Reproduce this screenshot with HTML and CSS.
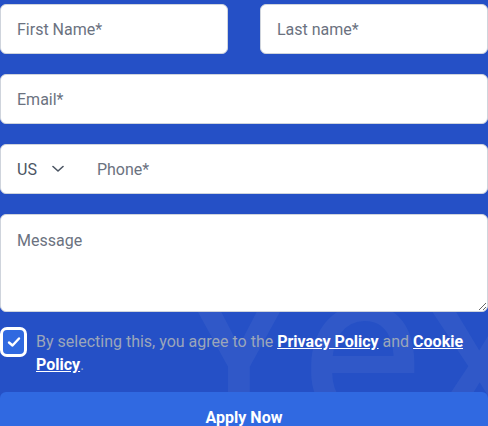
FILE: index.html
```html
<!DOCTYPE html>
<html>
<head>
<meta charset="utf-8">
<link rel="stylesheet" href="styles.css">
</head>
<body>
<div class="page">
  <div class="watermark" aria-hidden="true">Yex</div>
  <form class="form">
    <div class="row two">
      <input class="field" type="text" placeholder="First Name*">
      <input class="field" type="text" placeholder="Last name*">
    </div>
    <input class="field" type="email" placeholder="Email*">
    <div class="field phone">
      <span class="cc">US</span>
      <svg class="chev" width="12" height="8" viewBox="0 0 12 8"><path d="M1 1.5 L6 6 L11 1.5" fill="none" stroke="#4b5563" stroke-width="1.6" stroke-linecap="round" stroke-linejoin="round"/></svg>
      <span class="ph">Phone*</span>
    </div>
    <textarea class="field msg" placeholder="Message"></textarea>
    <label class="agree">
      <span class="box"><svg width="14" height="12" viewBox="0 0 14 12"><path d="M2 6.5 L5.5 9.5 L12 2.5" fill="none" stroke="#fff" stroke-width="2.4" stroke-linecap="round" stroke-linejoin="round"/></svg></span>
      <span class="txt">By selecting this, you agree to the <a href="#">Privacy Policy</a> and <a href="#">Cookie Policy</a>.</span>
    </label>
    <button class="btn" type="button">Apply Now</button>
  </form>
</div>
</body>
</html>
```
FILE: styles.css
```css
html, body {
  margin: 0;
  padding: 0;
}
body {
  background: #2550c6;
  font-family: Roboto, "Liberation Sans", Arial, sans-serif;
  overflow: hidden;
}
.page {
  position: relative;
  width: 488px;
  height: 426px;
  overflow: hidden;
  background: #2550c6;
}
.watermark {
  position: absolute;
  left: 170px;
  top: 235px;
  font-size: 230px;
  font-weight: 400;
  line-height: 1;
  color: rgba(255, 255, 255, 0.05);
  pointer-events: none;
  white-space: nowrap;
}
.form {
  position: relative;
  display: flex;
  flex-direction: column;
  gap: 20px;
  padding-top: 4px;
}
.row.two {
  display: grid;
  grid-template-columns: 228px 228px;
  column-gap: 32px;
}
.field {
  box-sizing: border-box;
  height: 50px;
  width: 100%;
  margin: 0;
  border: 1px solid #cfd4dc;
  border-radius: 6px;
  background: #fff;
  padding: 0 16px;
  font-family: Roboto, "Liberation Sans", Arial, sans-serif;
  font-size: 16px;
  color: #111827;
  outline: none;
}
.field::placeholder {
  color: #6b7280;
}
.phone {
  display: flex;
  align-items: center;
  color: #6b7280;
}
.cc {
  color: #4b5563;
}
.chev {
  margin-left: 15px;
}
.ph {
  margin-left: 33px;
}
.msg {
  height: 98px;
  padding-top: 16px;
  resize: vertical;
  display: block;
}
.agree {
  display: flex;
  align-items: flex-start;
  gap: 9px;
  margin-top: -5px;
}
.box {
  box-sizing: border-box;
  flex: none;
  width: 27px;
  height: 30px;
  border: 3px solid #fff;
  border-radius: 7px;
  background: #3069e0;
  display: flex;
  align-items: center;
  justify-content: center;
}
.txt {
  font-size: 16px;
  line-height: 23px;
  color: #9ba6ba;
  padding-top: 3px;
}
.txt a {
  color: #fff;
  font-weight: 700;
  text-decoration: underline;
}
.btn {
  margin-top: -4px;
  height: 50px;
  border: none;
  border-radius: 6px;
  background: #3069e1;
  color: #fff;
  font-family: Roboto, "Liberation Sans", Arial, sans-serif;
  font-size: 16px;
  font-weight: 700;
}
```
